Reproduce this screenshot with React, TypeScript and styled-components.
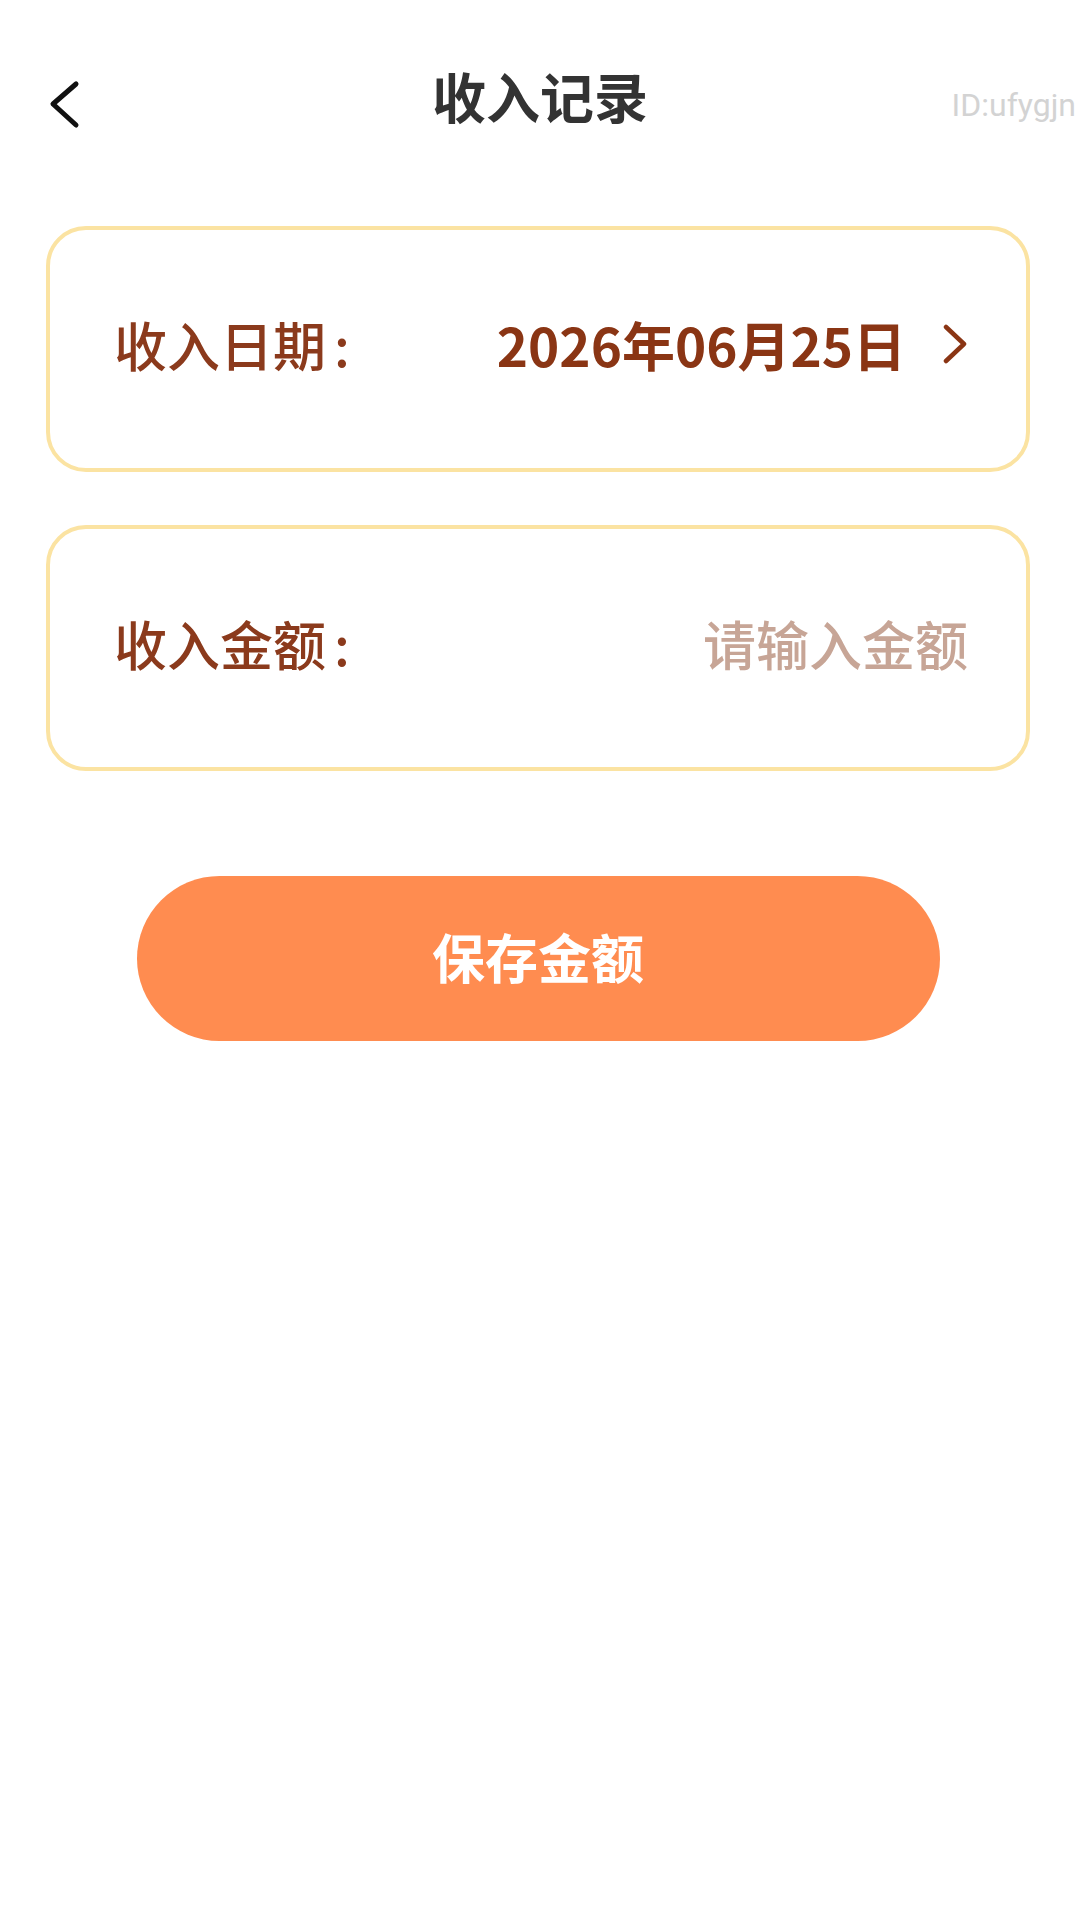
import React from "react";
import styled, { createGlobalStyle } from "styled-components";

const GlobalStyle = createGlobalStyle`
  html, body {
    margin: 0;
    padding: 0;
    background: #ffffff;
  }
  body {
    font-family: "Noto Sans CJK SC", "Noto Sans", Roboto, sans-serif;
  }
  * { box-sizing: border-box; }
`;

const Page = styled.div`
  width: 1080px;
  min-height: 1920px;
  background: #ffffff;
  display: flex;
  flex-direction: column;
`;

const Header = styled.header`
  height: 196px;
  display: grid;
  grid-template-columns: 1fr auto 1fr;
  align-items: center;
`;

const BackButton = styled.button`
  justify-self: start;
  margin-left: 46px;
  margin-top: 14px;
  padding: 0;
  border: none;
  background: transparent;
  display: flex;
  align-items: center;
  justify-content: center;
  width: 40px;
  height: 52px;
`;

const Title = styled.h1`
  margin: 0 0 4px;
  font-size: 54px;
  font-weight: 700;
  color: #333333;
  letter-spacing: 0;
  line-height: 1;
`;

const UserId = styled.span`
  justify-self: end;
  margin-right: 4px;
  margin-top: 14px;
  font-family: Roboto, "Noto Sans", sans-serif;
  font-size: 32px;
  color: #d3d3d3;
`;

const Form = styled.main`
  display: flex;
  flex-direction: column;
  gap: 53px;
  padding: 30px 50px 0 46px;
`;

const Card = styled.div`
  height: 246px;
  border: 4px solid #fbe3a2;
  border-radius: 40px;
  background: #ffffff;
  display: flex;
  align-items: center;
  padding: 0 58px 10px 64px;
  gap: 24px;
`;

const Label = styled.span`
  font-size: 53px;
  font-weight: 500;
  color: #8b3a1c;
  white-space: nowrap;
  flex-shrink: 0;
`;

const Colon = styled.span`
  margin-left: 8px;
`;

const Value = styled.div`
  flex: 1;
  display: flex;
  align-items: center;
  justify-content: flex-end;
  gap: 36px;
`;

const DateText = styled.span`
  font-size: 53px;
  font-weight: 700;
  color: #8a3514;
  white-space: nowrap;
`;

const AmountInput = styled.input`
  flex: 1;
  min-width: 0;
  border: none;
  outline: none;
  background: transparent;
  text-align: right;
  font-family: "Noto Sans CJK SC", "Noto Sans", sans-serif;
  font-size: 53px;
  font-weight: 500;
  color: #8a3514;
  padding: 0;
  &::placeholder {
    color: #c7a596;
    opacity: 1;
  }
`;

const SaveButton = styled.button`
  align-self: center;
  margin-top: 52px;
  width: 803px;
  height: 165px;
  border: none;
  border-radius: 83px;
  background: #ff8c50;
  color: #ffffff;
  font-family: "Noto Sans CJK SC", "Noto Sans", sans-serif;
  font-size: 53px;
  font-weight: 700;
  display: flex;
  align-items: center;
  justify-content: center;
  padding-bottom: 6px;
`;

const ChevronLeft = () => (
  <svg width="40" height="52" viewBox="0 0 40 52" fill="none">
    <polyline
      points="30,5 7,25 30,46"
      stroke="#111111"
      strokeWidth="5"
      strokeLinecap="round"
      strokeLinejoin="round"
    />
  </svg>
);

const ChevronRight = () => (
  <svg width="26" height="40" viewBox="0 0 26 40" fill="none">
    <polyline
      points="4,3 22,20 4,37"
      stroke="#8a3514"
      strokeWidth="4.5"
      strokeLinecap="round"
      strokeLinejoin="round"
    />
  </svg>
);

export default function App() {
  return (
    <>
      <GlobalStyle />
      <Page>
        <Header>
          <BackButton aria-label="返回">
            <ChevronLeft />
          </BackButton>
          <Title>收入记录</Title>
          <UserId>ID:ufygjn</UserId>
        </Header>
        <Form>
          <Card>
            <Label>
              收入日期<Colon>:</Colon>
            </Label>
            <Value>
              <DateText>2026年06月25日</DateText>
              <ChevronRight />
            </Value>
          </Card>
          <Card>
            <Label>
              收入金额<Colon>:</Colon>
            </Label>
            <AmountInput placeholder="请输入金额" />
          </Card>
          <SaveButton>保存金额</SaveButton>
        </Form>
      </Page>
    </>
  );
}
